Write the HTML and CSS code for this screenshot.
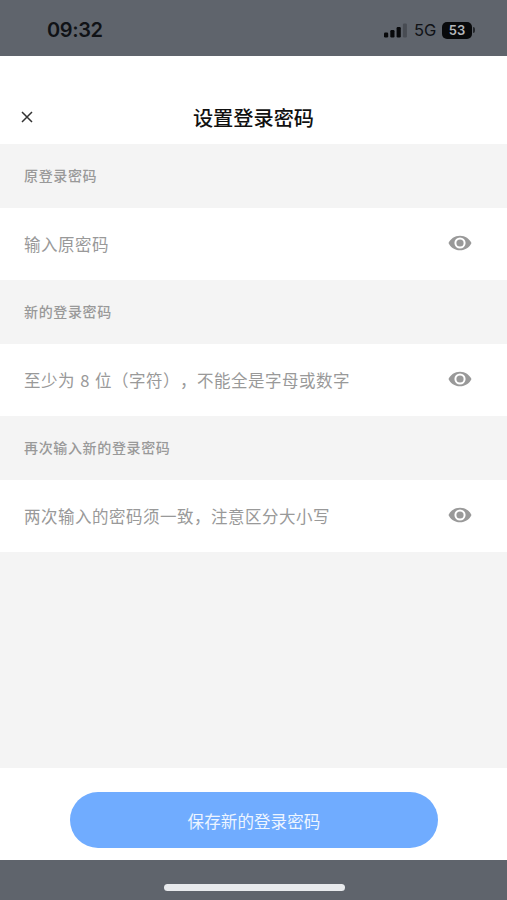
FILE: index.html
```html
<!DOCTYPE html>
<html lang="zh-CN">
<head>
<meta charset="utf-8">
<title>设置登录密码</title>
<link rel="stylesheet" href="styles.css">
</head>
<body>
<svg width="0" height="0" class="defs">
  <symbol id="eye" viewBox="0 0 24 16">
    <path fill="#999" fill-rule="evenodd" d="M12 .7C6.700 .7 2.400 3.800.5 8c1.900 4.200 6.200 7.300 11.500 7.300S21.600 12.200 23.500 8C21.600 3.800 17.300.7 12 .7ZM12 2.400a5.600 5.600 0 1 1 0 11.200a5.600 5.600 0 0 1 0-11.200Z"/>
    <circle cx="12" cy="8" r="3.600" fill="#999"/>
  </symbol>
</svg>
<div class="screen">
  <div class="status">
    <span class="time">09:32</span>
    <div class="indicators">
      <svg class="signal" width="23" height="15" viewBox="0 0 23 15">
        <rect x="0" y="9.500" width="4.200" height="5" rx="1.200" fill="#08090b"/>
        <rect x="6.300" y="7" width="4.200" height="7.500" rx="1.200" fill="#08090b"/>
        <rect x="12.600" y="4" width="4.200" height="10.500" rx="1.200" fill="#08090b"/>
        <rect x="18.900" y=".5" width="4" height="14" rx="1.200" fill="#484c53"/>
      </svg>
      <span class="network">5G</span>
      <span class="battery">53</span>
      <span class="cap"></span>
    </div>
  </div>
  <header class="header">
    <svg class="close" width="12" height="12" viewBox="0 0 12 12"><path d="M1 1l10 10M11 1L1 11" stroke="#333" stroke-width="1.500" fill="none"/></svg>
    <h1 class="title">设置登录密码</h1>
  </header>
  <main class="form">
    <div class="label">原登录密码</div>
    <div class="field"><span>输入原密码</span><svg class="eye" width="24" height="16"><use href="#eye"/></svg></div>
    <div class="label">新的登录密码</div>
    <div class="field"><span>至少为 8 位（字符），不能全是字母或数字</span><svg class="eye" width="24" height="16"><use href="#eye"/></svg></div>
    <div class="label">再次输入新的登录密码</div>
    <div class="field"><span>两次输入的密码须一致，注意区分大小写</span><svg class="eye" width="24" height="16"><use href="#eye"/></svg></div>
  </main>
  <footer class="footer"><button class="save">保存新的登录密码</button></footer>
  <div class="home"><span class="handle"></span></div>
</div>
</body>
</html>
```
FILE: styles.css
```css
* { box-sizing: border-box; }
body {
  margin: 0;
  font-family: "Inter", "Noto Sans CJK SC", sans-serif;
  text-spacing-trim: space-all;
}
.defs { display: none; }
.screen {
  width: 507px;
  height: 900px;
  display: flex;
  flex-direction: column;
  overflow: hidden;
  background: #f4f4f4;
}
.status {
  height: 56px;
  flex: none;
  display: flex;
  justify-content: space-between;
  align-items: center;
  padding: 4px 32px 0 47px;
  background: #5f646c;
  color: #101216;
}
.time { font-size: 20px; font-weight: 600; line-height: 24px; letter-spacing: -0.4px; }
.indicators { display: flex; align-items: center; }
.network { margin-left: 7px; font-size: 16.5px; line-height: 20px; width: 28px; }
.battery {
  width: 30px;
  height: 17px;
  border-radius: 5px;
  background: #08090b;
  color: #b4b7bc;
  font-size: 13px;
  font-weight: 600;
  line-height: 17px;
  text-align: center;
}
.cap { width: 2px; height: 6px; margin-left: 1px; border-radius: 0 2px 2px 0; background: #24272c; }
.header {
  height: 88px;
  flex: none;
  display: grid;
  grid-template-columns: 54px 1fr 54px;
  align-items: center;
  padding-top: 34px;
  background: #fff;
}
.close { justify-self: center; }
.title {
  margin: 0;
  padding-top: 1px;
  text-align: center;
  font-family: "Noto Sans CJK SC", sans-serif;
  font-size: 20.2px;
  font-weight: 500;
  line-height: 30px;
  color: #111;
}
.form { flex: 1; }
.label {
  height: 64px;
  padding-left: 24px;
  font-family: "Noto Sans CJK SC", sans-serif;
  font-size: 14px;
  font-weight: 500;
  line-height: 62px;
  letter-spacing: 0.65px;
  color: #999;
}
.field {
  height: 72px;
  display: flex;
  align-items: center;
  justify-content: space-between;
  padding: 0 35px 0 24px;
  background: #fff;
  font-family: "Noto Sans CJK SC", sans-serif;
  font-size: 16.5px;
  line-height: 24px;
  letter-spacing: 0.5px;
  word-spacing: 1px;
  color: #999;
}
.eye { margin-bottom: 3px; }
.footer {
  height: 92px;
  flex: none;
  display: flex;
  justify-content: center;
  padding-top: 24px;
  background: #fff;
}
.save {
  width: 368px;
  height: 56px;
  padding: 2px 0 0 1px;
  border: 0;
  border-radius: 28px;
  background: #70acff;
  color: #edf5ff;
  font-family: "Noto Sans CJK SC", sans-serif;
  font-size: 16.5px;
  letter-spacing: 0.1px;
}
.home {
  height: 40px;
  flex: none;
  display: flex;
  justify-content: center;
  padding: 24px 0 0 1px;
  background: #5f646c;
}
.handle { width: 181px; height: 7px; border-radius: 4px; background: #e8eaed; }
```
